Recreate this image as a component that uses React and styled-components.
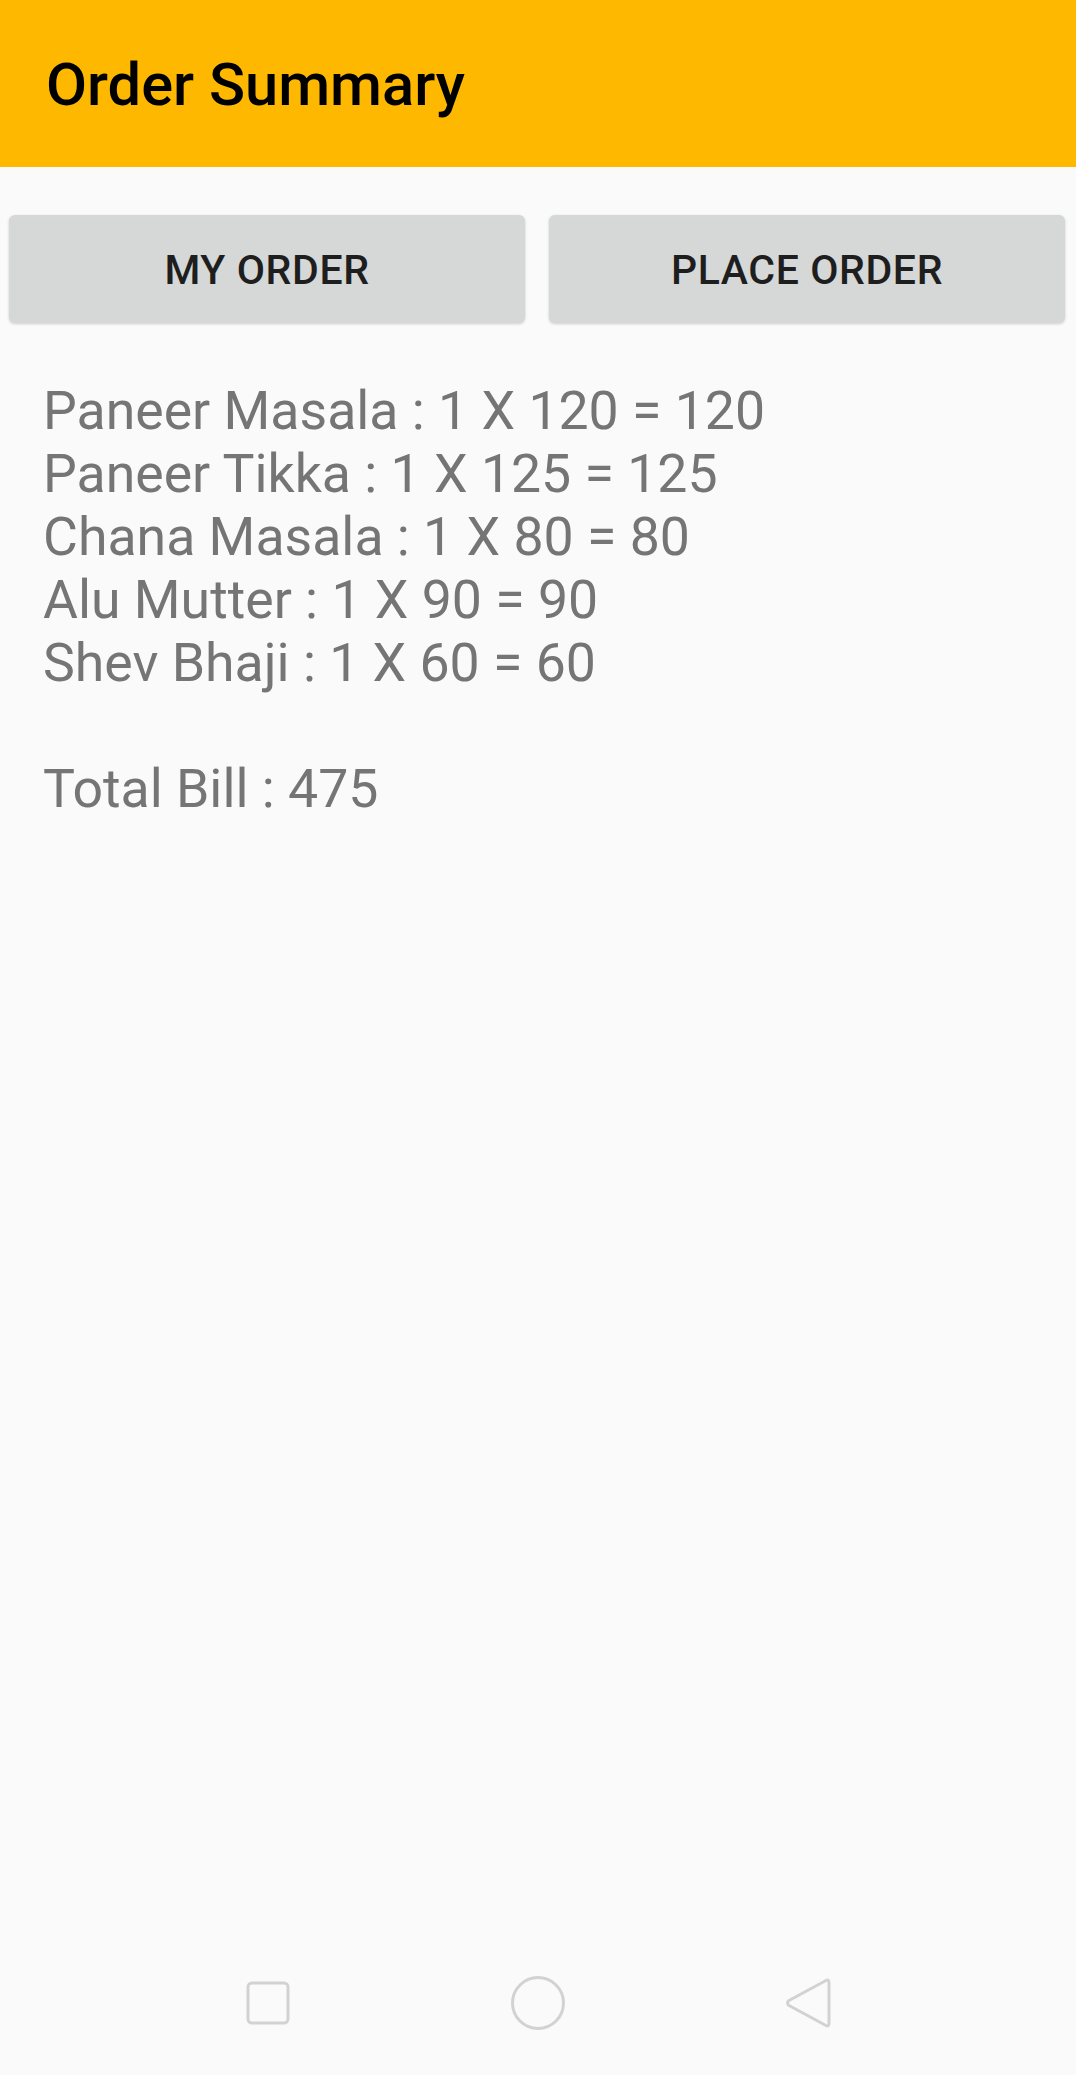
import React from "react";
import styled, { createGlobalStyle } from "styled-components";

const Global = createGlobalStyle`
  html, body { margin: 0; padding: 0; background: #fafafa; }
  body { font-family: Roboto, "Noto Sans", sans-serif; }
  * { box-sizing: border-box; }
`;

const Screen = styled.div`
  width: 1076px;
  height: 2075px;
  display: flex;
  flex-direction: column;
  background: #fafafa;
`;

const AppBar = styled.header`
  height: 167px;
  flex: none;
  background: #ffb800;
  display: flex;
  align-items: center;
  padding-left: 46px;
`;

const Title = styled.h1`
  margin: 0;
  font-family: Roboto, sans-serif;
  font-weight: 500;
  font-size: 59.6px;
  color: #000;
  line-height: 1;
  padding-top: 4px;
`;

const Content = styled.main`
  flex: 1;
  display: flex;
  flex-direction: column;
`;

const ButtonRow = styled.div`
  display: flex;
  gap: 24px;
  padding: 48px 11px 0 9px;
`;

const ActionButton = styled.button`
  flex: 1;
  height: 108px;
  border: none;
  border-radius: 6px;
  background: #d6d7d7;
  box-shadow: 0 1px 3px rgba(0, 0, 0, 0.18);
  font-family: Roboto, sans-serif;
  font-weight: 500;
  font-size: 41px;
  letter-spacing: 0.6px;
  color: #1e1e1e;
  padding: 0;
  padding-top: 2px;
`;

const Summary = styled.div`
  padding: 56px 0 0 43px;
  font-family: Roboto, sans-serif;
  font-size: 53.6px;
  line-height: 63px;
  color: #757575;
`;

const Line = styled.div`
  white-space: pre;
  min-height: 63px;
`;

const NavBar = styled.nav`
  height: 144px;
  flex: none;
  display: flex;
  align-items: center;
  justify-content: center;
`;

const NavSlot = styled.div`
  width: 270px;
  display: flex;
  justify-content: center;
  align-items: center;
`;

const items = [
  ["Paneer Masala", 1, 120],
  ["Paneer Tikka", 1, 125],
  ["Chana Masala", 1, 80],
  ["Alu Mutter", 1, 90],
  ["Shev Bhaji", 1, 60],
];

export default function App() {
  const total = items.reduce((s, [, q, p]) => s + q * p, 0);
  return (
    <Screen>
      <Global />
      <AppBar>
        <Title>Order Summary</Title>
      </AppBar>
      <Content>
        <ButtonRow>
          <ActionButton>MY ORDER</ActionButton>
          <ActionButton>PLACE ORDER</ActionButton>
        </ButtonRow>
        <Summary>
          {items.map(([n, q, p]) => (
            <Line key={n}>{`${n} : ${q} X ${p} = ${q * p}`}</Line>
          ))}
          <Line>{" "}</Line>
          <Line>{`Total Bill : ${total}`}</Line>
        </Summary>
      </Content>
      <NavBar>
        <NavSlot>
          <svg width="46" height="46" viewBox="0 0 46 46">
            <rect x="3" y="3" width="40" height="40" rx="4" fill="none" stroke="#d2d2d2" strokeWidth="3" />
          </svg>
        </NavSlot>
        <NavSlot>
          <svg width="56" height="56" viewBox="0 0 56 56">
            <circle cx="28" cy="28" r="25.5" fill="none" stroke="#d2d2d2" strokeWidth="3" />
          </svg>
        </NavSlot>
        <NavSlot>
          <svg width="48" height="54" viewBox="0 0 48 54">
            <path d="M42 4.5 Q45 3 45 7 L45 47 Q45 51 42 49.5 L5 29.5 Q2 27 5 24.5 Z" fill="none" stroke="#d2d2d2" strokeWidth="3" strokeLinejoin="round" />
          </svg>
        </NavSlot>
      </NavBar>
    </Screen>
  );
}
